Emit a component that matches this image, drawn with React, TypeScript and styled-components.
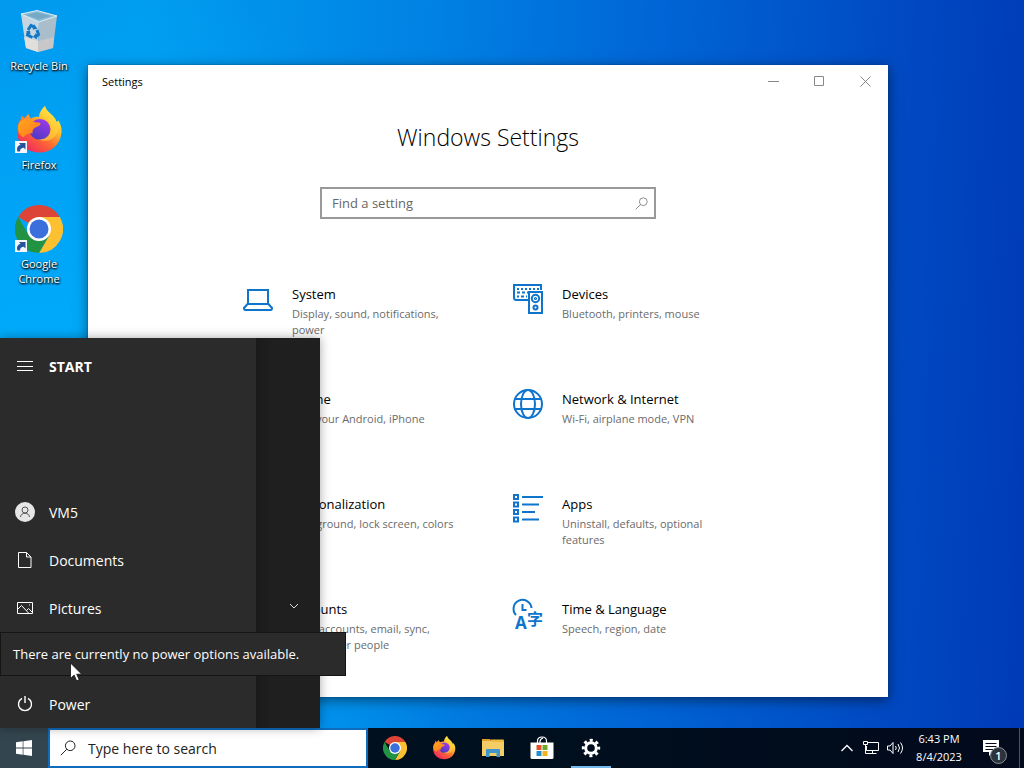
import React from "react";
import styled, { createGlobalStyle } from "styled-components";
import { Brush, Settings, Smartphone, User } from "lucide-react";

const GlobalStyle = createGlobalStyle`
  * {
    box-sizing: border-box;
  }
  body {
    margin: 0;
    font-family: "Open Sans", "Noto Sans", "Noto Sans CJK SC", sans-serif;
    font-size: 13px;
  }
  button,
  input {
    font: inherit;
    color: inherit;
  }
  button {
    padding: 0;
    border: 0;
    background: none;
  }
  svg {
    display: block;
    flex-shrink: 0;
  }
`;

const Desktop = styled.div`
  display: flex;
  flex-direction: column;
  min-height: 100vh;
  background:
    radial-gradient(circle at 0 60%, #00b0ff 0, #00b0ff00 520px),
    linear-gradient(
      92deg,
      #0096ec 0%,
      #009cf0 14%,
      #0083e4 40%,
      #0066d6 62%,
      #004cc4 84%,
      #003ab6 100%
    );
`;
const WorkArea = styled.main`
  position: relative;
  flex: 1;
`;

/* desktop shortcuts */
const Shortcuts = styled.div`
  display: flex;
  flex-direction: column;
  align-items: flex-start;
  padding-top: 7px;
`;
const Shortcut = styled.button`
  display: flex;
  flex-direction: column;
  align-items: center;
  gap: 3px;
  width: 78px;
  min-height: 99px;
  color: #fff;
  font-size: 11px;
  line-height: 15px;
  text-shadow: 0 1px 2px #000, 1px 1px 2px #000;
  > span {
    max-width: 64px;
  }
`;

/* settings window */
const Window = styled.section`
  position: absolute;
  top: 65px;
  right: 136px;
  bottom: 31px;
  left: 88px;
  display: flex;
  flex-direction: column;
  overflow: hidden;
  background: #fff;
  box-shadow: 0 0 1px #003a70, 0 3px 12px rgba(0, 0, 0, 0.5);
`;
const TitleBar = styled.header`
  display: flex;
  align-items: center;
  height: 32px;
  padding-left: 14px;
  font-size: 11px;
  color: #000;
  > span {
    margin-right: auto;
  }
`;
const WindowButton = styled.button`
  display: flex;
  align-items: center;
  justify-content: center;
  width: 46px;
  height: 32px;
  color: #888;
`;
const Content = styled.div`
  display: flex;
  flex-direction: column;
  align-items: center;
  padding: 24px 16px 0;
`;
const Heading = styled.h1`
  margin: 0 0 34px;
  font-size: 23px;
  line-height: 32px;
  font-weight: 300;
  color: #000;
`;
const FindBox = styled.label`
  display: flex;
  align-items: center;
  width: 336px;
  max-width: 100%;
  height: 32px;
  padding: 0 6px 0 10px;
  border: 2px solid #999;
  color: #777;
  > input {
    flex: 1;
    min-width: 0;
    padding: 0;
    border: 0;
    outline: 0;
    background: none;
  }
  > input::placeholder {
    color: #666;
    opacity: 1;
  }
`;
const Categories = styled.nav`
  display: grid;
  grid-template-columns: 1fr 1fr;
  grid-auto-rows: 105px;
  width: 100%;
  max-width: 540px;
  margin-top: 64px;
`;
const Category = styled.a`
  display: flex;
  gap: 18px;
  padding-left: 24px;
  color: #0f74cc;
  text-decoration: none;
`;
const CategoryText = styled.div`
  > h2 {
    margin: 1px 0 2px;
    font-size: 13px;
    line-height: 20px;
    font-weight: 400;
    color: #000;
  }
  > p {
    margin: 0;
    font-size: 11px;
    line-height: 16px;
    white-space: pre-line;
    color: #6b6b6b;
  }
`;

/* start menu */
const StartMenu = styled.aside`
  position: absolute;
  bottom: 0;
  left: 0;
  display: flex;
  width: 320px;
  height: 390px;
  color: #fff;
  background: #1f1f1f;
  box-shadow: 0 0 10px rgba(0, 0, 0, 0.35);
`;
const StartRail = styled.div`
  display: flex;
  flex-direction: column;
  justify-content: space-between;
  width: 256px;
  padding-top: 4px;
  background: #2b2b2b;
`;
const RailItem = styled.button<{ $bold?: boolean }>`
  display: flex;
  align-items: center;
  gap: 14px;
  width: 100%;
  height: 48px;
  padding-left: 15px;
  font-size: 14px;
  font-weight: ${(p) => (p.$bold ? 700 : 400)};
`;
const AppList = styled.div`
  display: flex;
  flex: 1;
  align-items: flex-end;
  justify-content: flex-end;
  padding: 0 20px 116px 0;
  background: linear-gradient(90deg, #1a1a1a, #1f1f1f 16px);
`;
const Tooltip = styled.div`
  position: absolute;
  bottom: 52px;
  left: 0;
  width: 346px;
  padding: 11px 12px;
  border: 1px solid #151515;
  font-size: 13px;
  line-height: 20px;
  color: #fff;
  background: #2b2b2b;
`;
const Pointer = styled.svg`
  position: absolute;
  bottom: 46px;
  left: 70px;
`;

/* taskbar */
const Bar = styled.footer`
  display: flex;
  height: 40px;
  color: #fff;
  background: linear-gradient(90deg, #00141f, #000f1e 50%, #020a1c);
`;
const StartButton = styled.button`
  display: flex;
  align-items: center;
  justify-content: center;
  width: 48px;
  background: #33454f;
`;
const SearchBox = styled.label`
  display: flex;
  align-items: center;
  gap: 12px;
  width: 320px;
  padding-left: 10px;
  border: 2px solid #0f6cbd;
  background: #fff;
  color: #222;
  > input {
    flex: 1;
    min-width: 0;
    padding: 0;
    border: 0;
    outline: 0;
    font-size: 14px;
  }
  > input::placeholder {
    color: #222;
    opacity: 1;
  }
`;
const Pinned = styled.div`
  display: flex;
  gap: 1px;
  margin-right: auto;
  padding-left: 3px;
`;
const PinnedButton = styled.button<{ $open?: boolean }>`
  display: flex;
  align-items: center;
  justify-content: center;
  width: 48px;
  background: ${(p) =>
    p.$open
      ? "linear-gradient(#76b9ed, #76b9ed) center bottom / 40px 2px no-repeat"
      : "none"};
`;
const Tray = styled.div`
  display: flex;
  align-items: stretch;
`;
const TrayButton = styled.button`
  display: flex;
  align-items: center;
  justify-content: center;
  width: 24px;
`;
const Clock = styled.button`
  width: 64px;
  font-size: 11px;
  line-height: 18px;
  text-align: center;
`;
const Notifications = styled.button`
  position: relative;
  width: 48px;
  padding-left: 11px;
`;
const Badge = styled.span`
  position: absolute;
  right: 12px;
  bottom: 4px;
  width: 17px;
  height: 17px;
  border: 1px solid #8a8f96;
  border-radius: 50%;
  font-size: 11px;
  line-height: 15px;
  font-weight: 600;
  background: #2c333d;
`;
const ShowDesktop = styled.button`
  width: 5px;
  border-left: 1px solid #4c5566;
`;

function ShortcutArrow() {
  return (
    <g>
      <path d="M0 35h12v12H0z" fill="#f3f6fb" />
      <path
        d="M2.500 45.500c-1.200-3.500.2-6 3-6.800L4 37h6.500v6.500L8.700 41.800C6.500 42 5 43 5 45.500z"
        fill="#24559c"
      />
    </g>
  );
}

function RecycleBinIcon() {
  return (
    <svg width="48" height="48" viewBox="0 0 48 48">
      <path d="M6 7 24 15 23 45 11 41z" fill="#c6d6e1" />
      <path d="M24 15 42 9 38 41 23 45z" fill="#a9bdca" />
      <path d="M9 30 23.500 34 23 45 11 41z" fill="#e2dedb" />
      <path d="M23.500 34 39 30 38 41 23 45z" fill="#c9c7c8" />
      <path d="M6 7 22 3.500 42 9 24 15z" fill="#8fbdd6" stroke="#dcedf5" />
      <path d="M11 8 22 5.500 36 9 24 12.500z" fill="#75a9c6" />
      <g fill="none" stroke="#1477c4" strokeWidth="3">
        <path d="M13 23l3-4.500 4 2" />
        <path d="M22 23l1.500 4.500-3 2.500" />
        <path d="M17.500 30.500l-5-2.500 1-3.500" />
      </g>
      <path d="M19 17l3.500 5-5 .5zM21 26l-3 4 4 2.500zM11 24.500l4-1 .5 4.500z" fill="#1477c4" />
    </svg>
  );
}

function FirefoxIcon({ size, shortcut }: { size: number; shortcut?: boolean }) {
  const id = "fx" + size;
  return (
    <svg width={size} height={size} viewBox="0 0 48 48">
      <defs>
        <linearGradient id={id + "a"} x1="0.85" y1="0.1" x2="0.2" y2="0.95">
          <stop offset="0" stopColor="#fff44f" />
          <stop offset="0.3" stopColor="#ffbd2e" />
          <stop offset="0.6" stopColor="#ff6a32" />
          <stop offset="1" stopColor="#f0285f" />
        </linearGradient>
        <linearGradient id={id + "b"} x1="0.8" y1="0" x2="0.3" y2="1">
          <stop offset="0" stopColor="#a13ae8" />
          <stop offset="1" stopColor="#4b39c4" />
        </linearGradient>
        <linearGradient id={id + "c"} x1="0" y1="0" x2="1" y2="1">
          <stop offset="0" stopColor="#ffa51f" />
          <stop offset="1" stopColor="#ff7a1c" />
        </linearGradient>
      </defs>
      <path
        d="M30 0c1 4 5 7 8 10 2 2 3 4 3.500 6l2-1.500C46 19 47 23 46.500 27 45 39 36 46.500 24.500 46.500 12 46.500 2 37.500 2 25c0-5 1.500-9 4-12l.5-3.500 3 2.500c1.500-1.500 3-3 4-4 .5 2 1.500 3.500 2.500 4.500 2.500-1.500 5-2 8-1.500 0-4 2.500-8 6-11z"
        fill={`url(#${id}a)`}
      />
      <circle cx="25" cy="23.500" r="10.500" fill={`url(#${id}b)`} />
      <path
        d="M3 20c1-4 4-7 8-7 4-.5 7 1 8 3l6 .8c1.500 2-1.500 3.500-4.500 4.700-3 1.500-3 4-3 6-4-1-7 1-9 4C4 29 2.500 25 3 20z"
        fill={`url(#${id}c)`}
      />
      <path
        d="M28 10c7 3 9 9 7.500 15-1.500 6-7 9-13 8 8 4 17 1 20-7 2-6-1-13-7-17-3-2-4-4-5.500-9-4 3-5 7-2 10z"
        fill="#ffd43a"
        opacity="0.6"
      />
      {shortcut && <ShortcutArrow />}
    </svg>
  );
}

function ChromeIcon({ size, shortcut }: { size: number; shortcut?: boolean }) {
  return (
    <svg width={size} height={size} viewBox="0 0 48 48">
      <path d="M24 24 3.200 12A24 24 0 0 1 44.800 12z" fill="#dc4437" />
      <path d="M24 12h20.800A24 24 0 0 1 24 48l10.400-18z" fill="#fcc031" />
      <path d="M13.600 30 3.200 12A24 24 0 0 0 24 48l10.400-18z" fill="#229342" />
      <circle cx="24" cy="24" r="12" fill="#fff" />
      <circle cx="24" cy="24" r="9.500" fill="#3b6fdc" />
      {shortcut && <ShortcutArrow />}
    </svg>
  );
}

function SearchIcon({ size }: { size: number }) {
  return (
    <svg width={size} height={size} viewBox="0 0 16 16" fill="none" stroke="currentColor">
      <circle cx="10.200" cy="5.800" r="4.800" />
      <path d="M6.800 9.200 .8 15.200" />
    </svg>
  );
}

const LineIcon = styled.svg.attrs({
  width: 32,
  height: 32,
  viewBox: "0 0 32 32",
  fill: "none",
  stroke: "currentColor",
  strokeWidth: 2,
})``;

function SystemIcon() {
  return (
    <LineIcon>
      <path d="M6 21V7h20v14M5.500 21h21L30 25q0 2-1.500 2h-25Q2 27 2 25z" />
    </LineIcon>
  );
}

function DevicesIcon() {
  return (
    <LineIcon>
      <path d="M16 17H4.500Q2 17 2 14.500V2h27v5" />
      <path d="M5 6h22" strokeDasharray="2 2" />
      <path d="M5 9.500h11M5 13.500h2M9 13.500h6" strokeDasharray="3 2" />
      <path d="M17 9h13v21H17z" fill="#fff" />
      <circle cx="23.500" cy="15.500" r="3.700" />
      <circle cx="23.500" cy="15.500" r=".6" />
      <circle cx="23.500" cy="24.500" r="2" />
    </LineIcon>
  );
}

function NetworkIcon() {
  return (
    <LineIcon>
      <circle cx="16" cy="16" r="14" />
      <ellipse cx="16" cy="16" rx="7" ry="14" />
      <path d="M3 11h26M3 21h26" />
    </LineIcon>
  );
}

function AppsIcon() {
  return (
    <LineIcon>
      <path d="M2 2h4v4H2zM2 9.500h4v4H2zM2 17h4v4H2zM2 24.500h4v4H2z" />
      <path d="M10 4h21M10 11.500h17M10 19h13M10 26.500h17" />
    </LineIcon>
  );
}

const Letter = styled.text`
  fill: currentColor;
  stroke: none;
  font-weight: 700;
`;

function TimeIcon() {
  return (
    <LineIcon overflow="visible">
      <path d="M4 17A9 9 0 1 1 19.500 10" />
      <path d="M10.500 6v6h4" />
      <Letter x="3" y="31" fontSize="17">
        A
      </Letter>
      <Letter x="15" y="27" fontSize="16">
        字
      </Letter>
    </LineIcon>
  );
}

const categories = [
  {
    name: "System",
    text: "Display, sound, notifications,\npower",
    icon: <SystemIcon />,
  },
  {
    name: "Devices",
    text: "Bluetooth, printers, mouse",
    icon: <DevicesIcon />,
  },
  {
    name: "Phone",
    text: "Link your Android, iPhone",
    icon: <Smartphone size={32} strokeWidth={1.5} />,
  },
  {
    name: "Network & Internet",
    text: "Wi-Fi, airplane mode, VPN",
    icon: <NetworkIcon />,
  },
  {
    name: "Personalization",
    text: "Background, lock screen, colors",
    icon: <Brush size={32} strokeWidth={1.5} />,
  },
  {
    name: "Apps",
    text: "Uninstall, defaults, optional\nfeatures",
    icon: <AppsIcon />,
  },
  {
    name: "Accounts",
    text: "Your accounts, email, sync,\nwork, other people",
    icon: <User size={32} strokeWidth={1.5} />,
  },
  {
    name: "Time & Language",
    text: "Speech, region, date",
    icon: <TimeIcon />,
  },
];

function SettingsWindow() {
  return (
    <Window>
      <TitleBar>
        <span>Settings</span>
        <WindowButton aria-label="Minimize">
          <svg width="11" height="11" stroke="currentColor">
            <path d="M0 5.500h11" />
          </svg>
        </WindowButton>
        <WindowButton aria-label="Maximize">
          <svg width="11" height="11" stroke="currentColor" fill="none">
            <path d="M.5.5h9v9h-9z" />
          </svg>
        </WindowButton>
        <WindowButton aria-label="Close">
          <svg width="11" height="11" stroke="currentColor">
            <path d="M.5.5l10 10M10.500.5l-10 10" />
          </svg>
        </WindowButton>
      </TitleBar>
      <Content>
        <Heading>Windows Settings</Heading>
        <FindBox>
          <input type="text" placeholder="Find a setting" aria-label="Find a setting" />
          <SearchIcon size={13} />
        </FindBox>
        <Categories>
          {categories.map((c) => (
            <Category key={c.name} href="#">
              {c.icon}
              <CategoryText>
                <h2>{c.name}</h2>
                <p>{c.text}</p>
              </CategoryText>
            </Category>
          ))}
        </Categories>
      </Content>
    </Window>
  );
}

const RailIcon = styled.svg.attrs({
  width: 20,
  height: 20,
  viewBox: "0 0 20 20",
  fill: "none",
  stroke: "currentColor",
})``;

function Start() {
  return (
    <StartMenu>
      <StartRail>
        <RailItem $bold>
          <RailIcon>
            <path d="M2 5.500h16M2 10.500h16M2 14.500h16" />
          </RailIcon>
          START
        </RailItem>
        <div>
          <RailItem>
            <RailIcon>
              <circle cx="10" cy="10" r="10" fill="#e6e6e6" stroke="none" />
              <circle cx="10" cy="8" r="3" stroke="#555" />
              <path d="M5.500 15c.3-5 8.700-5 9 0" stroke="#555" />
            </RailIcon>
            VM5
          </RailItem>
          <RailItem>
            <RailIcon>
              <path d="M3.500 2.500h8l4.500 4.500v10.500H3.500zM11.500 2.500V7H16" />
            </RailIcon>
            Documents
          </RailItem>
          <RailItem>
            <RailIcon>
              <path d="M2.500 4.500h15v11h-15zM2.500 11.500l4-4 7.500 8M11.500 12.500l2-2 4 4" />
              <path d="M14 7h1" />
            </RailIcon>
            Pictures
          </RailItem>
          <RailItem>
            <Settings size={20} strokeWidth={1.5} />
            Settings
          </RailItem>
          <RailItem>
            <RailIcon strokeWidth="1.400">
              <path d="M7 4.400a6.500 6.500 0 1 0 6 0M10 2v7" />
            </RailIcon>
            Power
          </RailItem>
        </div>
      </StartRail>
      <AppList>
        <button aria-label="Expand">
          <svg width="12" height="12" fill="none" stroke="#ddd">
            <path d="M2 4l4 4 4-4" />
          </svg>
        </button>
      </AppList>
      <Tooltip role="tooltip">There are currently no power options available.</Tooltip>
      <Pointer width="13" height="20" viewBox="0 0 13 20">
        <path
          d="M.5 1v15.500l3.600-3.400 2.500 5.700 2.600-1.100-2.500-5.500h5z"
          fill="#fff"
          stroke="#111"
          strokeWidth=".8"
        />
      </Pointer>
    </StartMenu>
  );
}

function Taskbar() {
  return (
    <Bar>
      <StartButton aria-label="Start">
        <svg width="16" height="16" fill="#fff">
          <path d="M0 2.300l6.700-1v6.300H0zM7.400 1.200 16 0v7.600H7.400zM0 8.400h6.700v6.300L0 13.800zM7.400 8.400H16V16l-8.600-1.200z" />
        </svg>
      </StartButton>
      <SearchBox>
        <SearchIcon size={16} />
        <input type="text" placeholder="Type here to search" aria-label="Search" />
      </SearchBox>
      <Pinned>
        <PinnedButton aria-label="Google Chrome">
          <ChromeIcon size={24} />
        </PinnedButton>
        <PinnedButton aria-label="Firefox">
          <FirefoxIcon size={24} />
        </PinnedButton>
        <PinnedButton aria-label="File Explorer">
          <svg width="22" height="20" viewBox="0 0 22 20">
            <path d="M0 1h8l2 2.500H0z" fill="#e0a12c" />
            <path d="M0 3h21q1 0 1 1v14H0z" fill="#f5cd66" />
            <path d="M9 1.500h12q1 0 1 1V4H9z" fill="#f0b93a" />
            <path d="M4 19v-7q0-1 1-1h12q1 0 1 1v7h-3.500v-4h-7v4z" fill="#3f96cf" />
          </svg>
        </PinnedButton>
        <PinnedButton aria-label="Microsoft Store">
          <svg width="24" height="24" viewBox="0 0 24 24">
            <path
              d="M7.500 7V5q0-4 4.500-4t4.500 4v2M10 7V5.500Q10 3 13 2"
              fill="none"
              stroke="#fff"
              strokeWidth="1.200"
            />
            <path d="M.5 6.500h23v15q0 1.500-1.500 1.500H2q-1.500 0-1.500-1.500z" fill="#fff" />
            <path d="M6.500 9h5v5h-5z" fill="#e2512a" />
            <path d="M12.500 9h5v5h-5z" fill="#6fa82e" />
            <path d="M6.500 15h5v5h-5z" fill="#1e90cf" />
            <path d="M12.500 15h5v5h-5z" fill="#f5b21c" />
          </svg>
        </PinnedButton>
        <PinnedButton aria-label="Settings" $open>
          <svg width="20" height="20" fill="none" stroke="#fff">
            <circle cx="10" cy="10" r="5.300" strokeWidth="3" />
            <circle
              cx="10"
              cy="10"
              r="7.700"
              strokeWidth="3"
              strokeDasharray="3 3.047"
              strokeDashoffset="1.500"
            />
          </svg>
        </PinnedButton>
      </Pinned>
      <Tray>
        <TrayButton aria-label="Show hidden icons">
          <svg width="14" height="14" fill="none" stroke="#fff" strokeWidth="1.300">
            <path d="M1.500 10 7 4.500l5.500 5.500" />
          </svg>
        </TrayButton>
        <TrayButton aria-label="Network">
          <svg width="18" height="16" fill="none" stroke="#fff">
            <path d="M6 2.500h10.500v8H4.500V6M10.500 10.500v3M6 13.500h8.500" />
            <path d="M1.500 1.500h4v3h-4zM3.500 4.500v9H6" />
          </svg>
        </TrayButton>
        <TrayButton aria-label="Volume">
          <svg width="17" height="16" fill="none" stroke="#fff">
            <path d="M.5 6h2.500l3-3.500v11L3 10H.5z" />
            <path d="M8.500 6q1.500 2 0 4M11 4q3 4 0 8M13.500 2.500q4 5.500 0 11" />
          </svg>
        </TrayButton>
        <Clock>
          6:43 PM
          <br />
          8/4/2023
        </Clock>
        <Notifications aria-label="1 new notification">
          <svg width="18" height="18">
            <path d="M1 1h16v12h-6l-4 4v-4H1z" fill="#fff" />
            <path d="M3.500 4.500h11M3.500 7.500h11M3.500 10.500h8" stroke="#020a1c" />
          </svg>
          <Badge>1</Badge>
        </Notifications>
        <ShowDesktop aria-label="Show desktop" />
      </Tray>
    </Bar>
  );
}

function App() {
  return (
    <Desktop>
      <GlobalStyle />
      <WorkArea>
        <Shortcuts>
          <Shortcut>
            <RecycleBinIcon />
            <span>Recycle Bin</span>
          </Shortcut>
          <Shortcut>
            <FirefoxIcon size={48} shortcut />
            <span>Firefox</span>
          </Shortcut>
          <Shortcut>
            <ChromeIcon size={48} shortcut />
            <span>Google Chrome</span>
          </Shortcut>
        </Shortcuts>
        <SettingsWindow />
        <Start />
      </WorkArea>
      <Taskbar />
    </Desktop>
  );
}

export default App;
